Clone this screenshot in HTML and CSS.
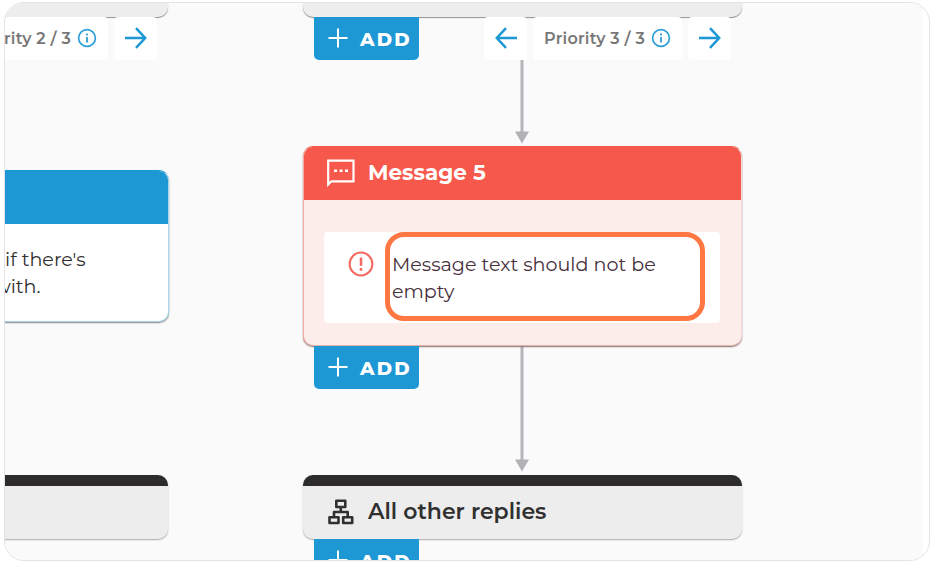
FILE: index.html
```html
<!DOCTYPE html>
<html lang="en">
<head>
<meta charset="utf-8">
<title>Flow builder</title>
<link rel="stylesheet" href="styles.css">
</head>
<body>
<svg class="symbols" aria-hidden="true">
  <symbol id="plus" viewBox="0 0 20 20"><path d="M10 .5v19M.5 10h19" fill="none" stroke="currentColor" stroke-width="2"/></symbol>
  <symbol id="arrow" viewBox="0 0 22 22"><path d="M0 11h20M11 1.2L20.2 11 11 20.8" fill="none" stroke="currentColor" stroke-width="2.5"/></symbol>
  <symbol id="info" viewBox="0 0 20 20"><circle cx="10" cy="10" r="8.4" fill="none" stroke="currentColor" stroke-width="1.7"/><path d="M10 9v5.6M10 5.5v2" stroke="currentColor" stroke-width="1.8"/></symbol>
</svg>
<main class="frame">
  <div class="canvas">
    <section class="node strip strip-left"></section>
    <div class="node pager pager-left">
      <span class="tile label"><span class="priority">Priority 2 / 3</span><svg class="info"><use href="#info"/></svg></span>
      <span class="tile step"><svg class="arrow"><use href="#arrow"/></svg></span>
    </div>
    <section class="node card reply">
      <header class="card-head"></header>
      <p class="text">if there's<br><span class="cut">with.</span></p>
    </section>
    <section class="node replies replies-left"></section>

    <section class="node strip strip-right"></section>
    <svg class="node wire wire-top" viewBox="0 0 16 84"><path d="M8 0v73" stroke="#b4b4b9" stroke-width="3"/><path d="M1 71.5h14L8 83.5z" fill="#b1b1b6"/></svg>
    <svg class="node wire wire-bottom" viewBox="0 0 16 126"><path d="M8 0v115" stroke="#b4b4b9" stroke-width="3"/><path d="M1 113.500h14L8 125.500z" fill="#b1b1b6"/></svg>
    <div class="node add add-top"><svg><use href="#plus"/></svg><span>ADD</span></div>
    <div class="node pager pager-right">
      <span class="tile step"><svg class="arrow back"><use href="#arrow"/></svg></span>
      <span class="tile label"><span class="priority">Priority 3 / 3</span><svg class="info"><use href="#info"/></svg></span>
      <span class="tile step"><svg class="arrow"><use href="#arrow"/></svg></span>
    </div>

    <section class="node card message">
      <header class="card-head">
        <svg class="chat" viewBox="0 0 28 28"><path d="M1.200 25.500V1.700h25.300v20.600H4.500z" fill="none" stroke="#fff" stroke-width="2.200"/><path d="M7 11.800h3M12.500 11.800h3M18 11.800h3" stroke="#fff" stroke-width="2.600"/></svg>
        <h2>Message 5</h2>
      </header>
      <div class="alert">
        <svg class="warn" viewBox="0 0 26 26"><circle cx="13" cy="13" r="11.400" fill="none" stroke="currentColor" stroke-width="2"/><path d="M13 6.500v8.300M13 17v2.700" stroke="currentColor" stroke-width="2.500"/></svg>
        <p class="text">Message text should not be<br>empty</p>
      </div>
    </section>
    <div class="node highlight"></div>
    <div class="node add add-middle"><svg><use href="#plus"/></svg><span>ADD</span></div>

    <section class="node replies replies-right">
      <svg class="tree" viewBox="0 0 26 26"><path d="M8.300 1.700h9v6.300h-9zM1.500 18.300h9v5.700h-9zM15.200 18.300h9v5.700h-9zM12.800 8v5M6 18.300V13h13.700v5.300" fill="none" stroke="#303030" stroke-width="2.600" stroke-linejoin="round"/></svg>
      <h2>All other replies</h2>
    </section>
    <div class="node add add-bottom"><svg><use href="#plus"/></svg><span>ADD</span></div>
  </div>
</main>
</body>
</html>
```
FILE: styles.css
```css
* { box-sizing: border-box; }
body { margin: 0; background: #fff; font-family: Montserrat, Inter, "Open Sans", sans-serif; color: #303030; }
h2, p { margin: 0; }
svg { display: block; flex: none; }
.symbols { position: absolute; width: 0; height: 0; }

.frame { width: 926px; height: 559px; margin: 2px 0 0 4px; border: 1px solid #e3e3e8; border-radius: 20px; overflow: hidden; }
.canvas { position: relative; width: 918px; height: 557px; background: #fafafa; overflow: hidden; }

/* Diagram nodes sit freely on the canvas */
.node { position: absolute; }

.strip { top: -20px; height: 34px; background: #ededed; border-radius: 0 0 10px 10px; box-shadow: 0 1px 1px #8f8f8f; }
.strip-left { left: -20px; width: 183px; }
.strip-right { left: 298px; width: 439px; }

.pager { top: 14px; display: flex; gap: 6px; }
.pager-left { right: 766px; }
.pager-right { left: 479px; }
.tile { display: flex; align-items: center; height: 43px; padding-bottom: 1px; background: #fff; border-radius: 4px; }
.step { width: 43px; justify-content: center; color: #1e98d4; }
.label { width: 149px; padding-left: 11px; gap: 4px; }
.priority { width: 103px; padding-top: 1px; font-size: 16px; font-weight: 600; line-height: 20px; white-space: nowrap; color: #777; letter-spacing: .25px; }
.info { width: 20px; height: 20px; color: #2b9fd7; }
.arrow { width: 22px; height: 22px; }
.back { transform: scaleX(-1); }

.card { border-radius: 10px; overflow: hidden; border: 1px solid; }
.card-head { display: flex; align-items: center; }
h2 { font-size: 21.500px; line-height: 26px; white-space: nowrap; }
.text { font-size: 19.150px; line-height: 27px; white-space: nowrap; }

.reply { left: -20px; top: 167px; width: 184px; height: 152px; background: #fff; border-color: #a8d5eb; border-top-color: #1e98d4; box-shadow: 0 1px 1.500px #888; }
.reply .card-head { height: 53px; margin: 0 -1px; background: #1e98d4; }
.reply .text { padding: 22px 0 0 19px; }
.cut { margin-left: -11px; }

.message { left: 298px; top: 143px; width: 439px; height: 200px; background: #fdedea; border-color: #f5aaa3; border-top-color: #f6584b; border-right-color: #f4d6d2; border-bottom-color: #e1b3ae; box-shadow: 0 1px 1.500px #8a7472; }
.message .card-head { height: 53px; margin: 0 -1px; padding: 0 0 1px 24px; gap: 13px; background: #f6584b; color: #fff; }
.message h2 { margin-top: -2px; }
.chat { width: 28px; height: 28px; }
.alert { display: flex; gap: 18px; width: 396px; height: 91px; margin: 32px 0 0 20px; padding: 19px 0 0 24px; background: #fff; border-radius: 4px; }
.alert .text { color: #47303c; }
.warn { width: 26px; height: 26px; color: #f4675e; }
.highlight { left: 380px; top: 229px; width: 320px; height: 89px; border: 5px solid #ff7743; border-radius: 19px; }

.add { left: 309px; display: flex; align-items: center; width: 105px; height: 43px; padding: 0 0 1px 14px; gap: 12px; background: #1e98d4; color: #fff; border-radius: 0 0 5px 5px; font-size: 18.500px; font-weight: 800; letter-spacing: 2.200px; }
.add svg { width: 20px; height: 20px; }
.add span { padding-top: 2px; }
.add-top { top: 14px; }
.add-middle { top: 343px; }
.add-bottom { top: 536px; }

.wire { width: 16px; }
.wire-top { left: 509px; top: 57px; height: 84px; }
.wire-bottom { left: 509px; top: 343px; height: 126px; }

.replies { display: flex; align-items: center; height: 64px; padding: 0 0 2px 25px; gap: 14px; top: 472px; border-top: 11px solid #2d2b2c; background: #ededed; border-radius: 10px; box-shadow: 0 1px 1.500px #aaa; }
.replies-left { left: -20px; width: 183px; }
.replies-right { left: 298px; width: 439px; }
.replies h2 { font-size: 22px; font-weight: 600; }
.tree { width: 26px; height: 26px; }
```
